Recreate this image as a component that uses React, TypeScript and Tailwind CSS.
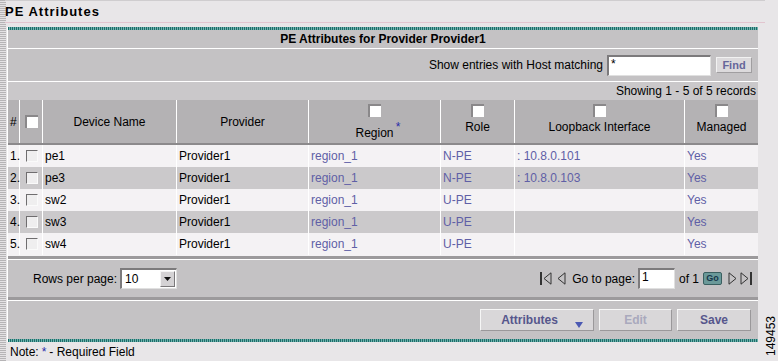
import React from 'react'

const rows = [
  { n: '1.', name: 'pe1', role: 'N-PE', loop: ': 10.8.0.101' },
  { n: '2.', name: 'pe3', role: 'N-PE', loop: ': 10.8.0.103' },
  { n: '3.', name: 'sw2', role: 'U-PE', loop: '' },
  { n: '4.', name: 'sw3', role: 'U-PE', loop: '' },
  { n: '5.', name: 'sw4', role: 'U-PE', loop: '' },
]

const cols = 'grid grid-cols-[12px_23px_134px_132px_132px_74px_170px_73px]'

function HeadBox() {
  return <span className="block w-[13px] h-[13px] bg-white border-t-2 border-l-2 border-[#8a888a]" />
}

function RowBox() {
  return <span className="block w-[12px] h-[12px] bg-[#efeeef] border-t border-l border-[#6f6d6f] border-b border-r border-b-[#fafafa] border-r-[#fafafa]" />
}

function Sunken({ className, children }: { className: string; children?: React.ReactNode }) {
  return (
    <div className={`bg-white border-t-2 border-l-2 border-[#7c7a7c] border-b border-r border-b-[#e0e0e0] border-r-[#e0e0e0] ${className}`}>
      {children}
    </div>
  )
}

function First() {
  return (
    <svg width="12" height="13" viewBox="0 0 12 13">
      <rect x="0" y="0" width="2" height="13" fill="#333" />
      <path d="M11 0.8 L4 6.5 L11 12.2 Z" fill="none" stroke="#333" strokeWidth="1" />
    </svg>
  )
}

function Prev() {
  return (
    <svg width="9" height="13" viewBox="0 0 9 13">
      <path d="M8 0.8 L1 6.5 L8 12.2 Z" fill="none" stroke="#333" strokeWidth="1" />
    </svg>
  )
}

function Next() {
  return (
    <svg width="9" height="13" viewBox="0 0 9 13">
      <path d="M1 0.8 L8 6.5 L1 12.2 Z" fill="none" stroke="#333" strokeWidth="1" />
    </svg>
  )
}

function Last() {
  return (
    <svg width="12" height="13" viewBox="0 0 12 13">
      <path d="M1 0.8 L8 6.5 L1 12.2 Z" fill="none" stroke="#333" strokeWidth="1" />
      <rect x="10" y="0" width="2" height="13" fill="#333" />
    </svg>
  )
}

function Btn({ w, children, dim }: { w: string; children: React.ReactNode; dim?: boolean }) {
  return (
    <div
      className={`${w} h-[22px] flex items-center justify-center bg-[#d9d7d9] border border-t-[#f6f6f6] border-l-[#f6f6f6] border-b-[#9a989a] border-r-[#9a989a] font-bold ${dim ? 'text-[#a9a9bd]' : 'text-[#56568c]'}`}
    >
      {children}
    </div>
  )
}

export default function App() {
  return (
    <div className="flex w-[778px] h-[361px] overflow-hidden bg-[#e8e6e8] text-[12px] text-black font-['Liberation_Sans',Arial,sans-serif]">
      {/* dotted left strip */}
      <div className="w-[6px] shrink-0 bg-[repeating-linear-gradient(180deg,#b6b4b6_0_1px,#e4e2e4_1px_2px)]" />

      <div className="flex flex-col w-[759px] shrink-0">
        {/* page title */}
        <div className="h-[23px] flex items-center border-t border-[#cfcdcf] border-b border-b-[#e2c5cf] font-bold text-[13px] tracking-[1px] -ml-[1px]">
          PE Attributes
        </div>
        <div className="h-[4px]" />

        {/* panel */}
        <div className="ml-[1px] w-[751px] flex flex-col border-l border-white bg-[#c4c2c4]">
          <div className="h-[3px] bg-[repeating-linear-gradient(90deg,#1d6d6a_0_1px,#6fb2ad_1px_2px)]" />
          <div className="h-[18px] flex items-center justify-center font-bold">
            PE Attributes for Provider Provider1
          </div>
          <div className="h-[1px] bg-white" />
          <div className="h-[32px] flex items-center justify-end pr-[6px]">
            <span>Show entries with Host matching</span>
            <Sunken className="ml-[4px] w-[104px] h-[21px] pl-[2px] leading-[14px]">*</Sunken>
            <div className="ml-[5px] w-[36px] h-[16px] flex items-center justify-center bg-[#dcdadc] border border-[#f2f2f2] border-b-[#a09ea0] border-r-[#a09ea0] font-bold text-[#66669a] text-[11px]">
              Find
            </div>
          </div>
          <div className="h-[1px] bg-white" />
          <div className="h-[18px] flex items-center justify-end pr-[2px] bg-[#cac8ca]">
            Showing 1 - 5 of 5 records
          </div>

          {/* table header */}
          <div className={`${cols} h-[45px] bg-[#b4b2b4] border-b-2 border-[#8c8a8c]`}>
            <div className="border-r border-white flex items-center pl-[2px]">#</div>
            <div className="border-r border-white flex items-center justify-center">
              <HeadBox />
            </div>
            <div className="border-r border-white flex items-center justify-center">Device Name</div>
            <div className="border-r border-white flex items-center justify-center">Provider</div>
            <div className="border-r border-white flex flex-col items-center pt-[4px]">
              <HeadBox />
              <span className="relative mt-[9px] leading-[14px]">
                Region
                <span className="absolute -right-[7px] -top-[6px] text-[#2a2aa8]">*</span>
              </span>
            </div>
            <div className="border-r border-white flex flex-col items-center pt-[4px]">
              <HeadBox />
              <span className="mt-[3px] leading-[14px]">Role</span>
            </div>
            <div className="border-r border-white flex flex-col items-center pt-[4px]">
              <HeadBox />
              <span className="mt-[3px] leading-[14px]">Loopback Interface</span>
            </div>
            <div className="flex flex-col items-center pt-[4px]">
              <HeadBox />
              <span className="mt-[3px] leading-[14px]">Managed</span>
            </div>
          </div>

          {/* rows */}
          {rows.map((r, i) => (
            <div key={r.n} className={`${cols} h-[22px] ${i % 2 ? 'bg-[#cbc9cb]' : 'bg-[#f4f2f4]'}`}>
              <div className="border-r border-white flex items-center pl-[2px]">{r.n}</div>
              <div className="border-r border-white flex items-center pl-[6px]">
                <RowBox />
              </div>
              <div className="border-r border-white flex items-center pl-[2px]">{r.name}</div>
              <div className="border-r border-white flex items-center pl-[2px]">Provider1</div>
              <div className="border-r border-white flex items-center pl-[2px] text-[#5f5fa6]">region_1</div>
              <div className="border-r border-white flex items-center pl-[2px] text-[#5f5fa6]">{r.role}</div>
              <div className="border-r border-white flex items-center pl-[2px] text-[#5f5fa6]">{r.loop}</div>
              <div className="flex items-center pl-[2px] text-[#5f5fa6]">Yes</div>
            </div>
          ))}
          <div className="h-[1px] bg-[#f4f2f4]" />

          <div className="h-[3px] bg-[#9c9a9c]" />
          <div className="h-[1px] bg-white" />
          {/* pagination */}
          <div className="h-[37px] flex items-center justify-between pl-[25px] pr-[6px]">
            <div className="flex items-center">
              <span>Rows per page:</span>
              <Sunken className="ml-[3px] w-[57px] h-[21px] flex items-center justify-between pl-[3px] pr-[1px]">
                <span className="leading-[14px]">10</span>
                <span className="w-[15px] h-[16px] flex items-center justify-center bg-[#d4d2d4] border border-t-[#f4f4f4] border-l-[#f4f4f4] border-b-[#7a787a] border-r-[#7a787a]">
                  <svg width="7" height="4" viewBox="0 0 7 4">
                    <path d="M0 0 L7 0 L3.5 4 Z" fill="#111" />
                  </svg>
                </span>
              </Sunken>
            </div>
            <div className="flex items-center">
              <First />
              <span className="ml-[5px]"><Prev /></span>
              <span className="ml-[6px]">Go to page:</span>
              <Sunken className="ml-[3px] w-[37px] h-[21px] pl-[2px] leading-[15px]">1</Sunken>
              <span className="ml-[4px]">of 1</span>
              <div className="ml-[4px] w-[19px] h-[13px] flex items-center justify-center rounded-[2px] bg-[#6a9999] border border-[#3a5f60] font-bold text-[9px] leading-none text-[#16364a]">
                Go
              </div>
              <span className="ml-[6px]"><Next /></span>
              <span className="ml-[3px]"><Last /></span>
            </div>
          </div>
          <div className="h-[3px] bg-[#9c9a9c]" />
          <div className="h-[1px] bg-white" />
          {/* buttons */}
          <div className="h-[38px] flex items-start justify-end pt-[8px] pr-[7px] gap-[5px]">
            <Btn w="w-[114px]">
              <span className="ml-[10px]">Attributes</span>
              <svg className="ml-[17px] mt-[10px]" width="8" height="6" viewBox="0 0 8 6">
                <path d="M0 0 L8 0 L4 6 Z" fill="#4b59b3" />
              </svg>
            </Btn>
            <Btn w="w-[73px]" dim>
              Edit
            </Btn>
            <Btn w="w-[74px]">Save</Btn>
          </div>
          <div className="h-[3px] bg-[repeating-linear-gradient(90deg,#1d6d6a_0_1px,#6fb2ad_1px_2px)]" />
        </div>

        {/* note */}
        <div className="flex-1 flex items-center pl-[4px]">
          Note: <span className="mx-[3px] text-[#2a2aa8]">*</span> - Required Field
        </div>
      </div>

      {/* figure number */}
      <div className="w-[13px] shrink-0 flex flex-col justify-end pb-[5px]">
        <span className="[writing-mode:vertical-rl] rotate-180 leading-[13px] text-[12px]">149453</span>
      </div>
    </div>
  )
}
